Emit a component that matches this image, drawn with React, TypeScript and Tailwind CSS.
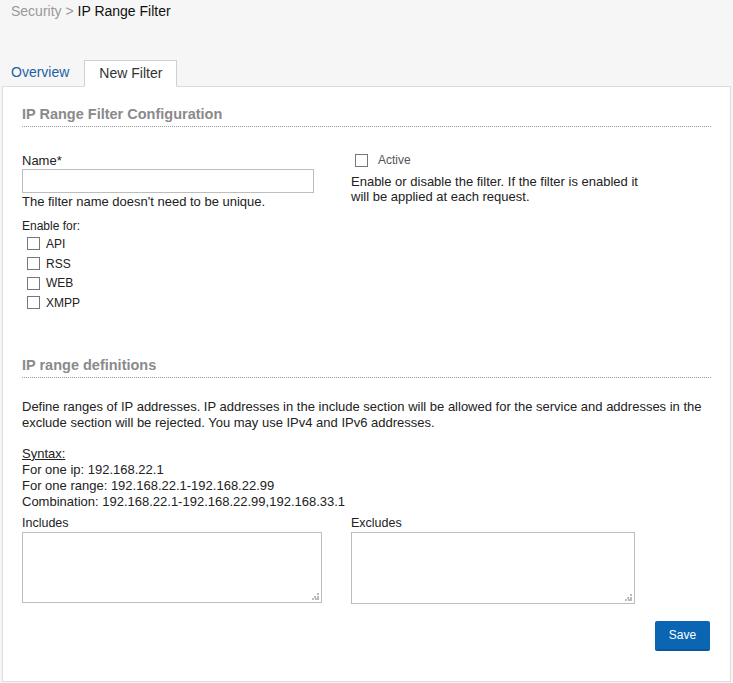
export default function App() {
  const services = ['API', 'RSS', 'WEB', 'XMPP'];

  const Grip = () => (
    <svg className="absolute right-[3px] bottom-[3px]" width="7" height="7" viewBox="0 0 7 7">
      <rect x="5" y="0" width="2" height="2" fill="#bbb" />
      <rect x="2" y="3" width="2" height="2" fill="#bbb" />
      <rect x="5" y="3" width="2" height="2" fill="#bbb" />
      <rect x="0" y="5" width="2" height="2" fill="#bbb" />
      <rect x="3" y="5" width="2" height="2" fill="#bbb" />
      <rect x="5" y="5" width="2" height="2" fill="#bbb" />
    </svg>
  );

  return (
    <div className="w-[733px] h-[683px] bg-[#f6f6f6] font-['Liberation_Sans',Arial,sans-serif] text-[#222] overflow-hidden">
      {/* breadcrumb */}
      <div className="pl-[11px] pt-[3px] text-[14px] leading-[16px]">
        <span className="text-[#999]">Security &gt; </span>
        <span className="text-[#111]">IP Range Filter</span>
      </div>

      {/* tabs */}
      <div className="mt-[41px] flex items-end pl-[11px] h-[26px]">
        <a className="text-[14px] leading-[16px] text-[#1d5fa6] pb-[6px] mr-[15px] cursor-pointer">Overview</a>
        <div className="relative z-10 w-[93px] h-[27px] -mb-[1px] bg-white border border-[#d0d0d0] border-b-white text-center text-[14px] leading-[24px] text-[#333]">
          New Filter
        </div>
      </div>

      {/* panel */}
      <div className="ml-[2px] w-[729px] h-[596px] bg-white border border-[#dcdcdc] px-[19px] pt-[19px]">
        <h2 className="text-[14.5px] leading-[16px] font-bold text-[#8a8a8a] pb-[4px] border-b border-dotted border-[#9a9a9a]">
          IP Range Filter Configuration
        </h2>

        <div className="flex mt-[27px]">
          <div className="w-[329px] shrink-0">
            <label className="block text-[13px] leading-[14px]">Name*</label>
            <input
              type="text"
              className="block mt-[1px] w-[292px] h-[24px] border border-[#bdbdbd] outline-none"
            />
            <p className="mt-[2px] text-[13px] leading-[14px]">The filter name doesn't need to be unique.</p>

            <p className="mt-[10px] text-[12px] leading-[14px]">Enable for:</p>
            <div className="mt-[1px] flex flex-col">
              {services.map((s) => (
                <label key={s} className="flex items-center h-[19.7px] pl-[5px] text-[12px]">
                  <span className="w-[13px] h-[13px] border border-[#777] bg-white mr-[6px]" />
                  {s}
                </label>
              ))}
            </div>
          </div>

          <div className="flex-1">
            <label className="flex items-center pl-[4px] text-[12px] leading-[14px] text-[#555] -mt-[2px]">
              <span className="w-[13px] h-[13px] border border-[#777] bg-white mr-[10px] mt-[2px]" />
              Active
            </label>
            <p className="mt-[7px] text-[13px] leading-[15px]">
              Enable or disable the filter. If the filter is enabled it
              <br />
              will be applied at each request.
            </p>
          </div>
        </div>

        <h2 className="mt-[44px] text-[14.5px] leading-[16px] font-bold text-[#8a8a8a] pb-[4px] border-b border-dotted border-[#9a9a9a]">
          IP range definitions
        </h2>

        <p className="mt-[21px] text-[13px] leading-[16px]">
          Define ranges of IP addresses. IP addresses in the include section will be allowed for the service and addresses in the
          <br />
          exclude section will be rejected. You may use IPv4 and IPv6 addresses.
        </p>

        <div className="mt-[15px] text-[13px] leading-[16px]">
          <div className="underline">Syntax:</div>
          <div>For one ip: 192.168.22.1</div>
          <div>For one range: 192.168.22.1-192.168.22.99</div>
          <div>Combination: 192.168.22.1-192.168.22.99,192.168.33.1</div>
        </div>

        <div className="flex mt-[6px]">
          <div className="w-[329px] shrink-0">
            <label className="block text-[12.5px] leading-[14px]">Includes</label>
            <div className="relative mt-[2px] w-[300px] h-[71px]">
              <textarea className="block w-full h-full border border-[#bdbdbd] outline-none resize-none" />
              <Grip />
            </div>
          </div>
          <div>
            <label className="block text-[12.5px] leading-[14px]">Excludes</label>
            <div className="relative mt-[2px] w-[284px] h-[72px]">
              <textarea className="block w-full h-full border border-[#bdbdbd] outline-none resize-none" />
              <Grip />
            </div>
          </div>
        </div>

        <div className="flex justify-end mt-[17px] pr-[1px]">
          <button className="w-[55px] h-[30px] rounded-[2px] bg-[#0a66b3] border-b-2 border-[#0858a0] text-white text-[12px]">
            Save
          </button>
        </div>
      </div>
    </div>
  );
}
